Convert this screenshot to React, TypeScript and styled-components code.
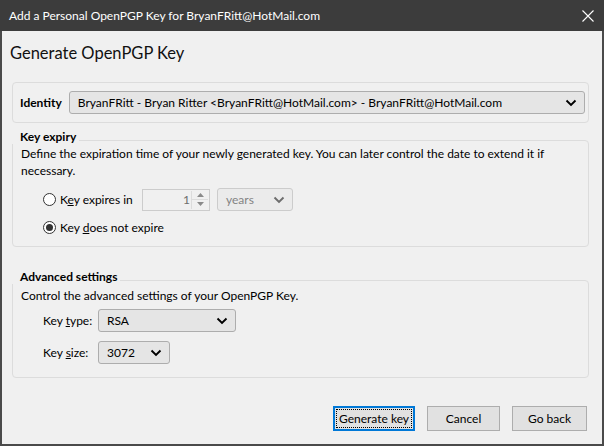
import React from 'react';
import styled, { createGlobalStyle } from 'styled-components';

const GlobalStyle = createGlobalStyle`
    html, body {
        margin: 0;
        padding: 0;
        background: #f0f0f0;
    }
    body {
        font-family: Lato, "Noto Sans", sans-serif;
        font-size: 12px;
        color: #000;
    }
`;

const Window = styled.div`
    width: 604px;
    height: 446px;
    box-sizing: border-box;
    background: #4a4a4a;
    padding: 0 2px 2px 2px;
    display: flex;
    flex-direction: column;
`;

const TitleBar = styled.div`
    height: 31px;
    margin: 0 -2px;
    padding: 0 9px;
    background: #3c3c3c;
    color: #fff;
    display: flex;
    align-items: center;
    justify-content: space-between;
    font-size: 12px;
`;

const CloseIcon = styled.svg`
    width: 12px;
    height: 12px;
    margin-right: 1px;
`;

const Body = styled.div`
    flex: 1;
    background: #f0f0f0;
    display: flex;
    flex-direction: column;
    padding: 0 13px 0 10px;
`;

const Heading = styled.h1`
    margin: 11px 0 0 -2px;
    font-size: 16.5px;
    font-weight: 400;
    line-height: 22px;
    color: #111;
`;

const Box = styled.div<{ $top?: number }>`
    margin-top: ${p => p.$top ?? 0}px;
    border: 1px solid #dcdcdc;
    border-radius: 4px;
    box-sizing: border-box;
`;

const IdentityBox = styled(Box)`
    height: 41px;
    display: flex;
    align-items: center;
    padding: 0 3px 0 7px;
    gap: 7px;
`;

const Bold = styled.span`
    font-weight: 700;
`;

const Legend = styled.div<{ $top: number }>`
    margin-top: ${p => p.$top}px;
    padding: 0 3px 0 8px;
    align-self: flex-start;
    font-weight: 700;
    line-height: 15px;
    background: #f0f0f0;
    position: relative;
    z-index: 1;
    margin-bottom: -4px;
`;

const Desc = styled.p<{ $top: number }>`
    margin: 0;
    padding: ${p => p.$top}px 8px 0 8px;
    line-height: 17px;
`;

const Select = styled.div<{ $w?: number; $disabled?: boolean }>`
    height: 23px;
    box-sizing: border-box;
    ${p => (p.$w ? `width: ${p.$w}px;` : 'flex: 1;')}
    border: 1px solid ${p => (p.$disabled ? '#cccccc' : '#adadad')};
    border-radius: 3px;
    background: ${p => (p.$disabled ? '#ebebeb' : '#e5e5e5')};
    color: ${p => (p.$disabled ? '#838383' : '#000')};
    display: flex;
    align-items: center;
    justify-content: space-between;
    padding: 0 7px 0 8px;
`;

const Chevron = ({ color }: { color?: string }) => (
    <svg width="12" height="8" viewBox="0 0 12 8">
        <path d="M1.5 1.5 L6 6 L10.5 1.5" fill="none" stroke={color ?? '#000'} strokeWidth="1.9" />
    </svg>
);

const RadioList = styled.div`
    display: flex;
    flex-direction: column;
    gap: 5px;
    padding: 9px 0 7px 30px;
`;

const RadioRow = styled.div`
    display: flex;
    align-items: center;
    height: 23px;
`;

const RadioCircle = styled.span<{ $checked?: boolean }>`
    width: 13px;
    height: 13px;
    box-sizing: border-box;
    border-radius: 50%;
    border: 1px solid #333;
    background: #fff;
    display: flex;
    align-items: center;
    justify-content: center;
    margin-right: 4px;
    &::after {
        content: '';
        width: 7px;
        height: 7px;
        border-radius: 50%;
        background: ${p => (p.$checked ? '#333' : 'transparent')};
    }
`;

const RadioLabel = styled.span<{ $w?: number }>`
    ${p => (p.$w ? `width: ${p.$w}px;` : '')}
`;

const NumberInput = styled.div`
    width: 68px;
    height: 22px;
    box-sizing: border-box;
    border: 1px solid #cccccc;
    background: #f0f0f0;
    color: #6d6d6d;
    display: flex;
    align-items: center;
    justify-content: flex-end;
    margin-right: 7px;
`;

const Spinner = styled.div`
    width: 16px;
    height: 18px;
    margin: 0 1px 0 1px;
    display: flex;
    flex-direction: column;
    border-left: 1px solid #dcdcdc;
    & > div {
        flex: 1;
        display: flex;
        align-items: center;
        justify-content: center;
    }
    & > div + div {
        border-top: 1px solid #dcdcdc;
    }
`;

const FieldGrid = styled.div`
    display: grid;
    grid-template-columns: 55px auto;
    justify-content: start;
    align-items: center;
    row-gap: 9px;
    padding: 5px 0 13px 30px;
`;

const Footer = styled.div`
    margin-top: auto;
    display: flex;
    justify-content: flex-end;
    gap: 12px;
    padding: 0 2px 13px 0;
`;

const Button = styled.button<{ $w: number; $focused?: boolean }>`
    width: ${p => p.$w}px;
    height: 25px;
    font-family: inherit;
    font-size: 12px;
    color: #000;
    background: #e1e1e1;
    border: 1px solid ${p => (p.$focused ? '#0078d7' : '#adadad')};
    ${p => (p.$focused ? 'box-shadow: inset 0 0 0 1px #0078d7; outline: 1px dotted #000; outline-offset: -4px;' : '')}
    padding: 0;
`;

const U = styled.span`
    text-decoration: underline;
`;

export default function App() {
    return (
        <>
            <GlobalStyle />
            <Window>
                <TitleBar>
                    <span>Add a Personal OpenPGP Key for BryanFRitt@HotMail.com</span>
                    <CloseIcon viewBox="0 0 12 12">
                        <path d="M0.5 0.5 L11.5 11.5 M11.5 0.5 L0.5 11.5" stroke="#fff" strokeWidth="1.1" />
                    </CloseIcon>
                </TitleBar>
                <Body>
                    <Heading>Generate OpenPGP Key</Heading>

                    <IdentityBox $top={18}>
                        <Bold>Identity</Bold>
                        <Select>
                            <span>BryanFRitt - Bryan Ritter &lt;BryanFRitt@HotMail.com&gt; - BryanFRitt@HotMail.com</span>
                            <Chevron />
                        </Select>
                    </IdentityBox>

                    <Legend $top={6}>Key expiry</Legend>
                    <Box>
                        <Desc $top={4}>
                            Define the expiration time of your newly generated key. You can later control the date to extend it if necessary.
                        </Desc>
                        <RadioList>
                            <RadioRow>
                                <RadioCircle />
                                <RadioLabel $w={82}>K<U>e</U>y expires in</RadioLabel>
                                <NumberInput>
                                    1
                                    <Spinner>
                                        <div>
                                            <svg width="7" height="4" viewBox="0 0 7 4"><path d="M0 4 L3.5 0 L7 4Z" fill="#8a8a8a" /></svg>
                                        </div>
                                        <div>
                                            <svg width="7" height="4" viewBox="0 0 7 4"><path d="M0 0 L3.5 4 L7 0Z" fill="#8a8a8a" /></svg>
                                        </div>
                                    </Spinner>
                                </NumberInput>
                                <Select $w={76} $disabled>
                                    <span>years</span>
                                    <Chevron color="#6d6d6d" />
                                </Select>
                            </RadioRow>
                            <RadioRow>
                                <RadioCircle $checked />
                                <RadioLabel>Key <U>d</U>oes not expire</RadioLabel>
                            </RadioRow>
                        </RadioList>
                    </Box>

                    <Legend $top={22}>Advanced settings</Legend>
                    <Box>
                        <Desc $top={6}>Control the advanced settings of your OpenPGP Key.</Desc>
                        <FieldGrid>
                            <span>Key <U>t</U>ype:</span>
                            <Select $w={138}>
                                <span>RSA</span>
                                <Chevron />
                            </Select>
                            <span>Key <U>s</U>ize:</span>
                            <Select $w={72}>
                                <span>3072</span>
                                <Chevron />
                            </Select>
                        </FieldGrid>
                    </Box>

                    <Footer>
                        <Button $w={82} $focused>Generate key</Button>
                        <Button $w={73}>Cancel</Button>
                        <Button $w={75}>Go back</Button>
                    </Footer>
                </Body>
            </Window>
        </>
    );
}
